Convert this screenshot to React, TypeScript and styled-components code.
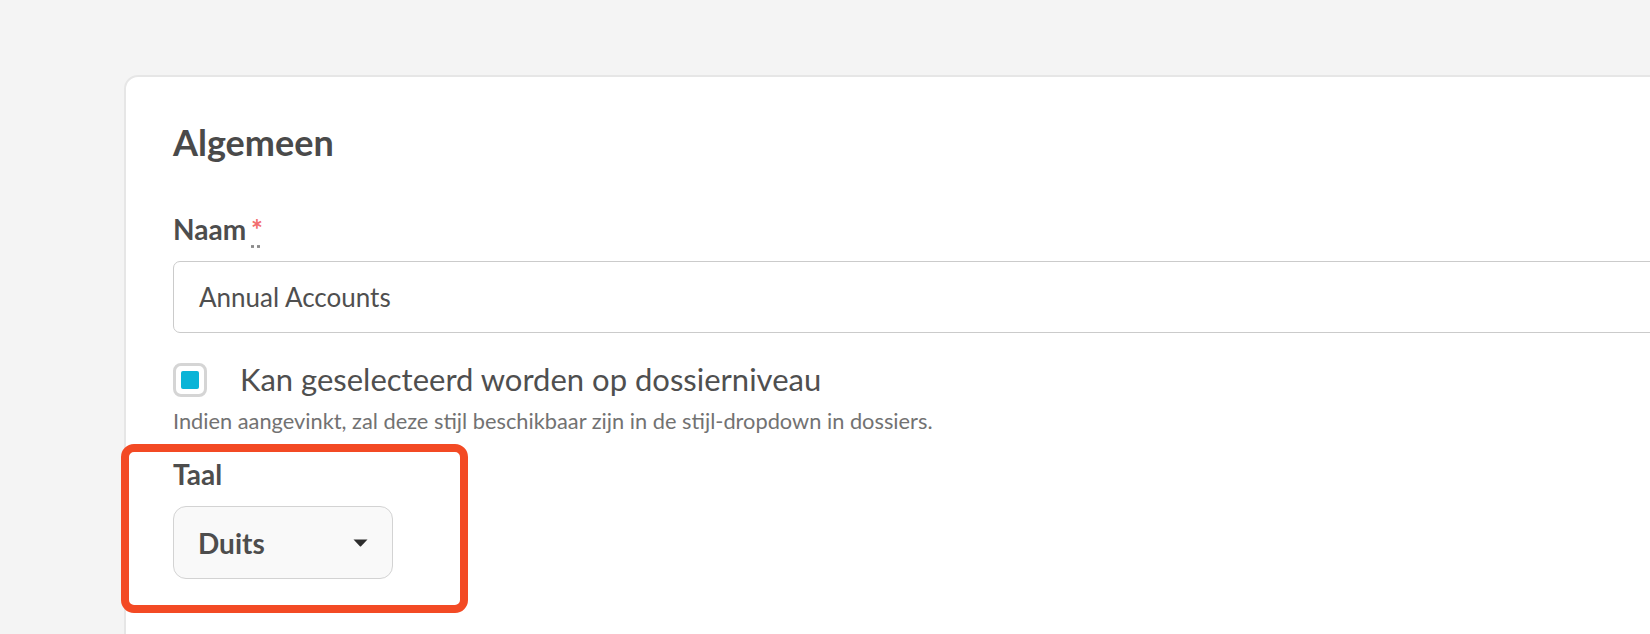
import React from "react";
import styled, { createGlobalStyle } from "styled-components";

const GlobalStyle = createGlobalStyle`
	html, body {
		margin: 0;
		padding: 0;
		background: #f4f4f4;
		overflow: hidden;
	}
	body {
		font-family: Lato, "Noto Sans", sans-serif;
		color: #4d4d4d;
	}
`;

const Page = styled.div`
	padding: 75px 0 0 124px;
	height: 634px;
	box-sizing: border-box;
	overflow: hidden;
`;

const Card = styled.section`
	width: 1700px;
	height: 600px;
	box-sizing: border-box;
	background: #fff;
	border: 2px solid #e6e6e6;
	border-radius: 14px;
	padding: 44px 0 0 47px;
`;

const Heading = styled.h2`
	margin: 0 0 48px;
	font-size: 36px;
	line-height: 43px;
	font-weight: 700;
	color: #4a4a4a;
`;

const Label = styled.label<{ gap: number }>`
	display: block;
	font-size: 28px;
	line-height: 34px;
	font-weight: 700;
	color: #4d4d4d;
	margin-bottom: ${({ gap }) => gap}px;
`;

const Required = styled.abbr`
	margin-left: 5px;
	color: #f26d6d;
	font-size: 28px;
	font-weight: 700;
	text-decoration: underline dotted #8a8a8a;
	text-underline-offset: 5px;
`;

const TextInput = styled.div`
	display: flex;
	align-items: center;
	height: 72px;
	box-sizing: border-box;
	border: 1.5px solid #cbcbcb;
	border-radius: 7px;
	padding-left: 25px;
	font-size: 26px;
	color: #4f4f4f;
`;

const CheckRow = styled.div`
	display: flex;
	align-items: center;
	gap: 33px;
	margin-top: 28px;
`;

const CheckBox = styled.span`
	display: flex;
	align-items: center;
	justify-content: center;
	width: 34px;
	height: 34px;
	box-sizing: border-box;
	border: 3px solid #d5d5d5;
	border-radius: 8px;

	&::after {
		content: "";
		width: 18px;
		height: 18px;
		border-radius: 2px;
		background: #0ab4d7;
	}
`;

const CheckLabel = styled.span`
	font-size: 31px;
	line-height: 37px;
	color: #4f4f4f;
`;

const Hint = styled.p`
	margin: 10px 0 0;
	font-size: 21.8px;
	line-height: 26px;
	color: #727272;
`;

const Highlight = styled.div`
	position: relative;
	width: 220px;
	margin-top: 23px;

	&::before {
		content: "";
		position: absolute;
		left: -52px;
		top: -13px;
		right: -75px;
		bottom: -34px;
		border: 8.5px solid #f34a24;
		border-radius: 13px;
		pointer-events: none;
	}
`;

const Select = styled.div`
	display: flex;
	align-items: center;
	justify-content: space-between;
	width: 220px;
	height: 73px;
	box-sizing: border-box;
	padding: 0 24px 0 24px;
	background: #f9f9f9;
	border: 1.5px solid #d3d3d3;
	border-radius: 13px;
	font-size: 28px;
	font-weight: 700;
	color: #4d4d4d;
`;

const Caret = styled.svg`
	width: 15px;
	height: 8px;
	fill: #2e2e2e;
`;

export default function App() {
	return (
		<Page>
			<GlobalStyle />
			<Card>
				<Heading>Algemeen</Heading>

				<Label gap={15}>
					Naam<Required title="verplicht">*</Required>
				</Label>
				<TextInput>Annual Accounts</TextInput>

				<CheckRow>
					<CheckBox />
					<CheckLabel>Kan geselecteerd worden op dossierniveau</CheckLabel>
				</CheckRow>
				<Hint>
					Indien aangevinkt, zal deze stijl beschikbaar zijn in de stijl-dropdown in dossiers.
				</Hint>

				<Highlight>
					<Label gap={15}>Taal</Label>
					<Select>
						Duits
						<Caret viewBox="0 0 15 8">
							<path d="M0.5 0.5 H14.5 L8.1 7.2 Q7.5 7.8 6.9 7.2 Z" />
						</Caret>
					</Select>
				</Highlight>
			</Card>
		</Page>
	);
}
